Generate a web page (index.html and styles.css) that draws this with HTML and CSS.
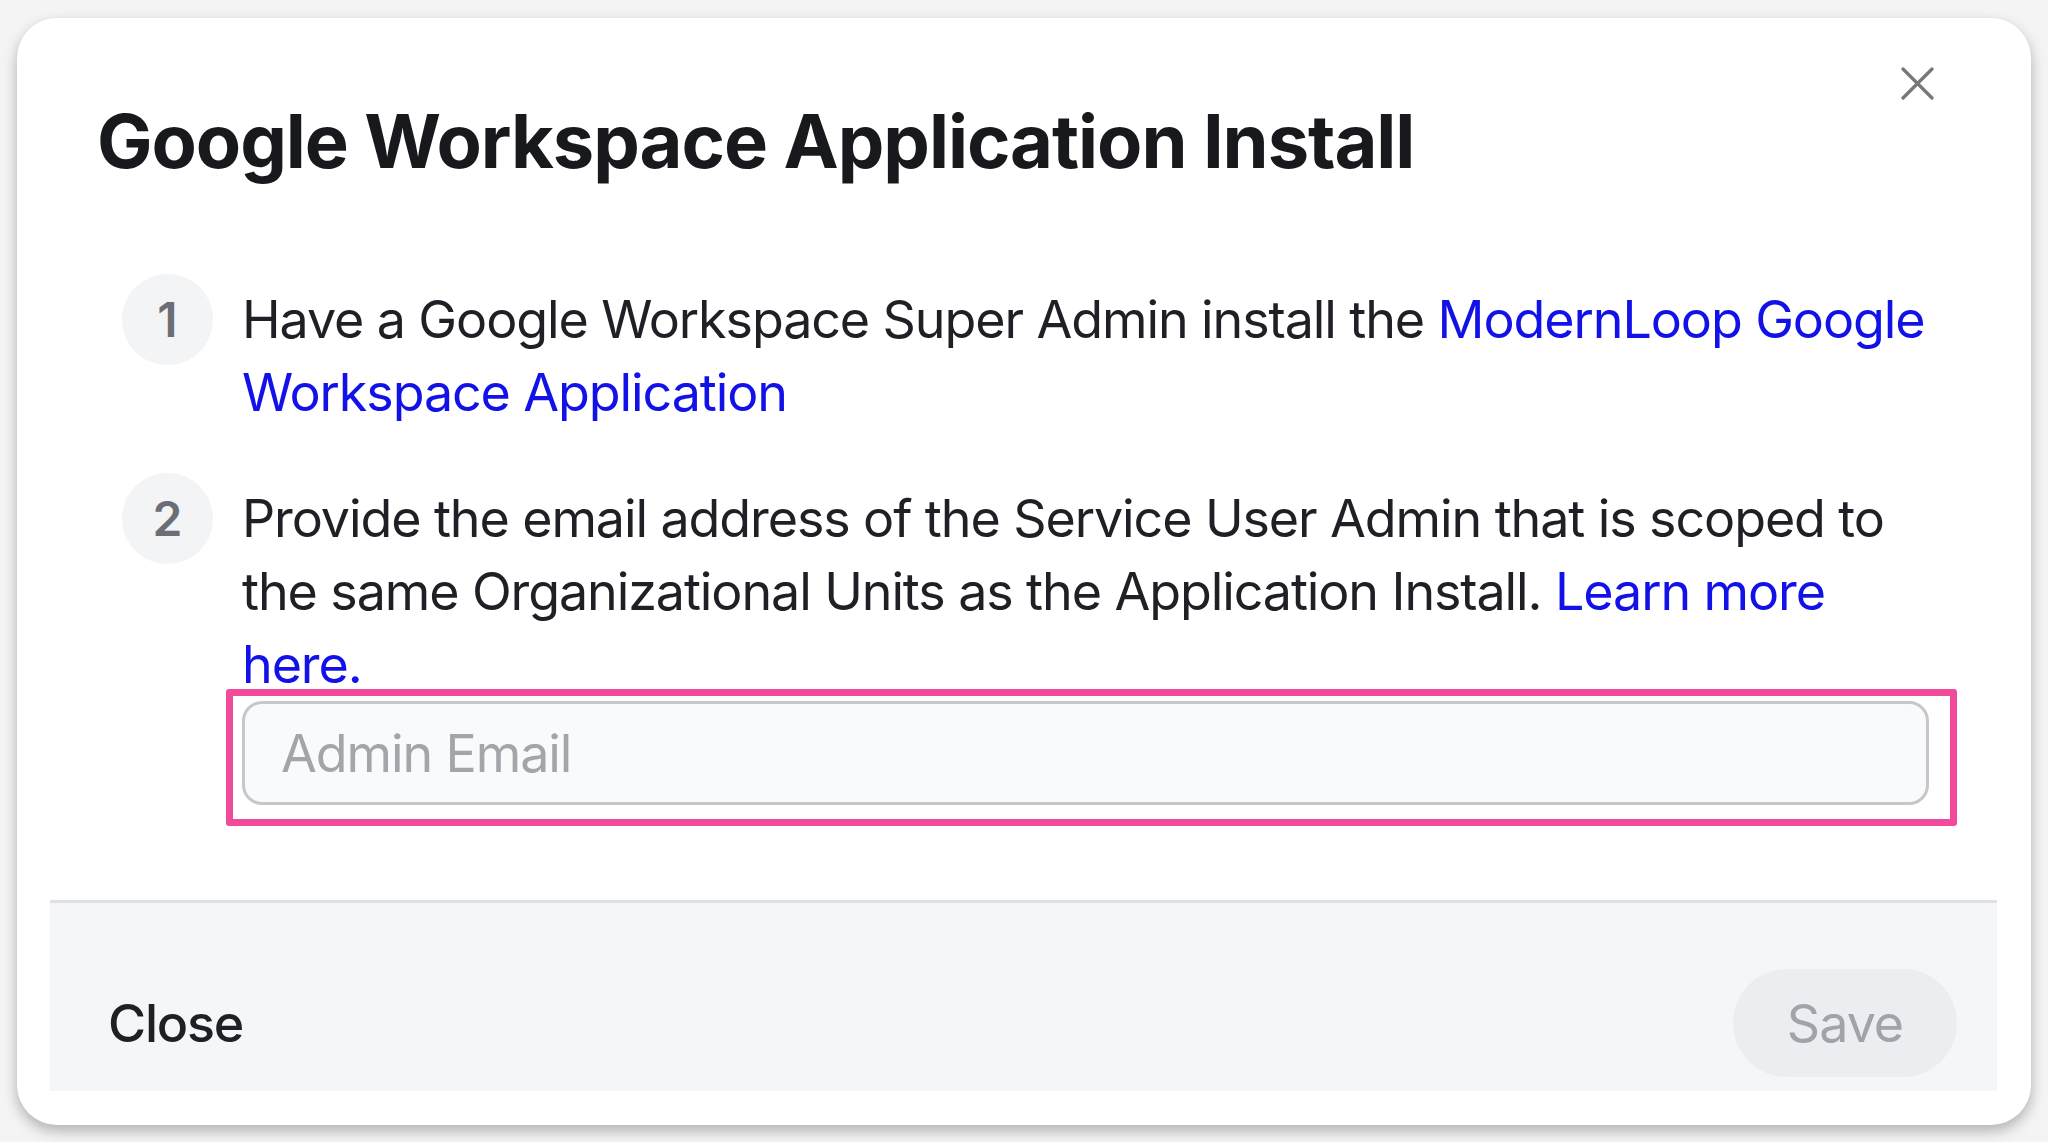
FILE: index.html
```html
<!DOCTYPE html>
<html lang="en">
<head>
    <meta charset="UTF-8">
    <meta name="viewport" content="width=device-width, initial-scale=1.0">
    <title>Google Workspace Application Install</title>
    <link rel="stylesheet" href="styles.css">
</head>
<body>
    <div class="modal">
        <div class="modal-header">
            <h1 class="modal-title">Google Workspace Application Install</h1>
            <button class="icon-close" aria-label="Close">
                <svg width="33" height="33" viewBox="0 0 33 33">
                    <path d="M2 2 L31 31 M31 2 L2 31" stroke="#767779" stroke-width="3.2" stroke-linecap="round" fill="none"/>
                </svg>
            </button>
        </div>

        <!-- Install steps -->
        <div class="steps">
            <div class="step">
                <div class="step-num">1</div>
                <div class="step-body">
                    <p class="step-text">Have a Google Workspace Super Admin install the <a href="#">ModernLoop Google Workspace Application</a></p>
                </div>
            </div>
            <div class="step">
                <div class="step-num">2</div>
                <div class="step-body">
                    <p class="step-text">Provide the email address of the Service User Admin that is scoped to the same Organizational Units as the Application Install. <a href="#">Learn more here.</a></p>
                    <div class="field highlight">
                        <input type="email" class="email-input" placeholder="Admin Email">
                    </div>
                </div>
            </div>
        </div>

        <div class="modal-footer">
            <button class="btn-text">Close</button>
            <button class="btn-save" disabled>Save</button>
        </div>
    </div>
</body>
</html>
```

FILE: styles.css
```css
body {
    margin: 0;
    padding: 18px 17px;
    background-color: #f4f4f4;
    font-family: Inter, "Noto Sans", sans-serif;
    color: #1e2025;
}
.modal {
    width: 2014px;
    background-color: #fff;
    border-radius: 40px;
    box-shadow: 0 6px 14px rgba(0, 0, 0, 0.28);
    overflow: hidden;
}
.modal-header {
    display: flex;
    justify-content: space-between;
    align-items: flex-start;
    padding: 41px 90px 0 80px;
}
.modal-title {
    margin: 38px 0 0;
    font-size: 74px;
    line-height: 89px;
    font-weight: 700;
    letter-spacing: -1.05px;
    color: #18191c;
}
.icon-close {
    width: 48px;
    height: 48px;
    padding: 0;
    border: none;
    background: none;
    display: flex;
    align-items: center;
    justify-content: center;
    cursor: pointer;
}
.steps {
    display: flex;
    flex-direction: column;
    gap: 44px;
    padding: 0 102px 0 105px;
    margin: 88px 0 95px;
}
.step {
    display: flex;
    align-items: flex-start;
    gap: 29px;
}
.step-num {
    flex-shrink: 0;
    width: 91px;
    height: 91px;
    border-radius: 50%;
    background-color: #f3f4f6;
    color: #6b6e74;
    font-size: 48px;
    font-weight: 600;
    display: flex;
    align-items: center;
    justify-content: center;
}
.step-body {
    flex: 1;
    padding-top: 9px;
}
.step-text {
    margin: 0 -12px 0 0;
    font-size: 52px;
    line-height: 73px;
    letter-spacing: -1.1px;
}
.step-text a {
    color: #1111e8;
    text-decoration: none;
}
.field {
    position: relative;
}
/* pink call-out round the admin email field */
.highlight::after {
    content: "";
    position: absolute;
    top: -12px;
    left: -16px;
    right: -28px;
    bottom: -21px;
    border: 7px solid #f24a9a;
    border-radius: 3px;
    pointer-events: none;
}
.email-input {
    display: block;
    box-sizing: border-box;
    width: 100%;
    height: 104px;
    padding: 0 36px;
    border: 3px solid #c5c7cb;
    border-radius: 20px;
    background-color: #f9fafb;
    font-family: inherit;
    font-size: 52px;
    letter-spacing: -1.1px;
    color: #1e2025;
}
.email-input::placeholder {
    color: #a2a5aa;
}
.modal-footer {
    display: flex;
    justify-content: space-between;
    align-items: center;
    margin: 0 34px 34px 33px;
    padding: 66px 40px 14px 58px;
    border-top: 3px solid #dfe0e4;
    background-color: #f5f6f8;
}
.btn-text {
    padding: 0;
    border: none;
    background: none;
    font-family: inherit;
    font-size: 52px;
    font-weight: 500;
    letter-spacing: -1.2px;
    color: #1e2025;
    cursor: pointer;
}
.btn-save {
    width: 224px;
    height: 108px;
    border: none;
    border-radius: 54px;
    background-color: #ecedf0;
    font-family: inherit;
    font-size: 52px;
    letter-spacing: -1px;
    color: #a0a3a8;
}
```
